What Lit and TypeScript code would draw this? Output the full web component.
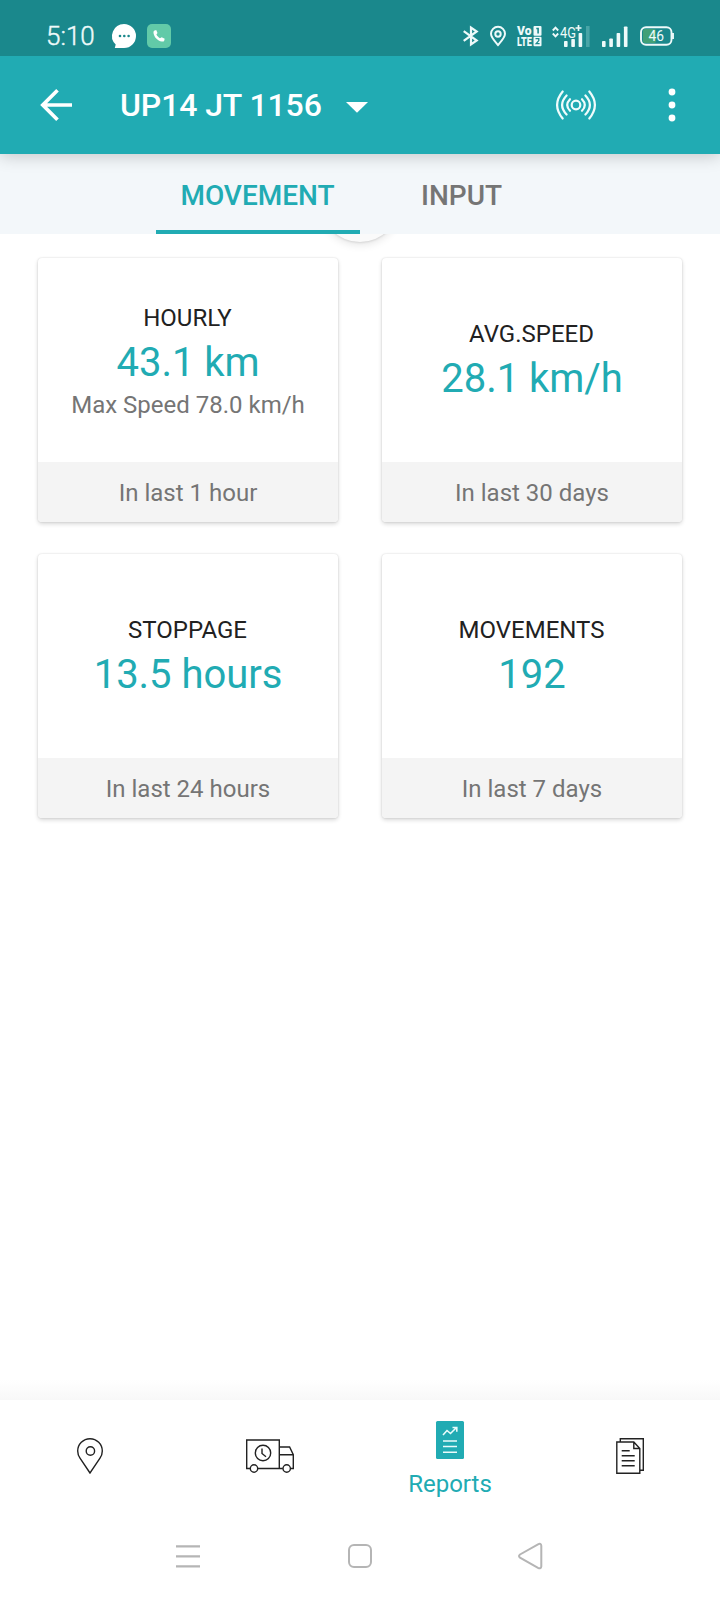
import { LitElement, html, css, svg, nothing } from "lit";
import { customElement, property } from "lit/decorators.js";

@customElement("stat-card")
class StatCard extends LitElement {
  @property() label = "";
  @property() value = "";
  @property() detail = "";
  @property() period = "";

  static styles = css`
    :host {
      display: flex;
      flex-direction: column;
      height: 264px;
      border-radius: 4px;
      overflow: hidden;
      background: #fff;
      box-shadow: 0 0 2px rgba(0, 0, 0, 0.14), 0 2px 4px rgba(0, 0, 0, 0.16);
      text-align: center;
      font-size: 24px;
      line-height: 28px;
    }
    .body {
      flex: 1;
      display: flex;
      flex-direction: column;
      justify-content: center;
      padding-top: 2px;
    }
    .label { color: #212121; padding-right: 1px; }
    .value {
      color: #21abb3;
      font-size: 40px;
      line-height: 47px;
      padding-top: 7px;
      letter-spacing: -0.05px;
    }
    .detail { color: #757575; padding-top: 5px; }
    .foot {
      height: 60px;
      line-height: 62px;
      background: #f4f4f4;
      color: #757575;
    }
  `;

  render() {
    return html`
      <div class="body">
        <div class="label">${this.label}</div>
        <div class="value">${this.value}</div>
        ${this.detail ? html`<div class="detail">${this.detail}</div>` : nothing}
      </div>
      <div class="foot">${this.period}</div>
    `;
  }
}

const cards = [
  { label: "HOURLY", value: "43.1 km", detail: "Max Speed 78.0 km/h", period: "In last 1 hour" },
  { label: "AVG.SPEED", value: "28.1 km/h", detail: "", period: "In last 30 days" },
  { label: "STOPPAGE", value: "13.5 hours", detail: "", period: "In last 24 hours" },
  { label: "MOVEMENTS", value: "192", detail: "", period: "In last 7 days" },
];

const bars = (x: number, step: number, tops: number[]) =>
  tops.map((t, i) => svg`<rect x=${x + i * step} y=${t} width="3.6" height=${22 - t} rx="0.8" fill="#eefafa"/>`);

@customElement("app-root")
class AppRoot extends LitElement {
  static styles = css`
    :host {
      display: flex;
      flex-direction: column;
      width: 720px;
      height: 1600px;
      overflow: hidden;
      background: #fff;
      font-family: Roboto, sans-serif;
    }
    svg { display: block; flex: none; overflow: visible; }
    .status {
      flex: none;
      display: flex;
      align-items: center;
      height: 56px;
      box-sizing: border-box;
      padding: 16px 46px 0 46px;
      background: #1a888c;
      color: #eefafa;
      position: relative;
      z-index: 3;
    }
    .clock { width: 66px; font-size: 26px; line-height: 40px; font-weight: 300; -webkit-text-stroke: 0.4px #eefafa; }
    .apps { display: flex; gap: 11px; flex: 1; }
    .system { display: flex; align-items: center; }
    .bt { margin-right: 12px; }
    .loc { margin-right: 11px; }
    .volte { margin-right: 10px; }
    .cell { margin-right: 12px; }
    .signal { margin-right: 12px; }
    .bar {
      flex: none;
      display: flex;
      align-items: center;
      height: 98px;
      box-sizing: border-box;
      padding: 0 44px 0 40px;
      background: #21abb3;
      color: #fff;
      position: relative;
      z-index: 2;
      box-shadow: 0 2px 16px rgba(0, 0, 0, 0.2);
    }
    .title { margin-left: 48px; font-size: 32px; font-weight: 500; line-height: 98px; letter-spacing: -0.1px; }
    .caret { margin: 5px auto 0 24px; }
    .radio { margin-right: 72px; }
    .tabs {
      flex: none;
      display: flex;
      justify-content: center;
      height: 80px;
      background: #f3f7fa;
      position: relative;
      z-index: 1;
    }
    .tab {
      box-sizing: border-box;
      height: 80px;
      padding: 3px 1px 0 0;
      line-height: 78px;
      font-size: 28px;
      font-weight: 500;
      text-align: center;
      color: #757575;
      width: 204px;
    }
    .tab.active { color: #21abb3; border-bottom: 4px solid #21abb3; }
    .content { flex: 1; position: relative; padding: 24px 38px 0; }
    .spinner {
      position: absolute;
      left: 320px;
      top: -72px;
      width: 80px;
      height: 80px;
      border-radius: 50%;
      background: #fafafa;
      box-shadow: 0 1px 2px rgba(0, 0, 0, 0.1), 0 3px 9px rgba(0, 0, 0, 0.1);
    }
    .grid {
      display: grid;
      grid-template-columns: 300px 300px;
      gap: 32px 44px;
      position: relative;
    }
    .shade { flex: none; height: 20px; background: linear-gradient(#fff, #f8f8f8); }
    .nav {
      flex: none;
      display: grid;
      grid-template-columns: repeat(4, 180px);
      height: 112px;
      background: #fff;
    }
    .item { display: flex; flex-direction: column; align-items: center; justify-content: center; }
    .item.on { justify-content: flex-start; padding-top: 21px; color: #21abb3; font-size: 24px; line-height: 28px; gap: 11px; }
    .keys {
      flex: none;
      display: flex;
      align-items: center;
      justify-content: space-between;
      height: 88px;
      box-sizing: border-box;
      padding: 0 176px;
    }
  `;

  render() {
    return html`
      <div class="status">
        <div class="clock">5:10</div>
        <div class="apps">
          <svg width="24" height="24" viewBox="0 0 24 24">
            <path d="M12 0a12 12 0 1 1 0 24H2.800l.900-3.400A12 12 0 0 1 12 0z" fill="#fff"/>
            <g fill="#1a888c"><circle cx="8" cy="12" r="1.300"/><circle cx="12.300" cy="12" r="1.300"/><circle cx="16.600" cy="12" r="1.300"/></g>
          </svg>
          <svg width="24" height="24" viewBox="0 0 24 24">
            <rect width="24" height="24" rx="5" fill="#62caa8"/>
            <path d="M7 6.800l2.200-.800 1.300 3-1.100 1.600c.900 1.600 2 2.800 3.600 3.700l1.700-1 3 1.400-.600 2.300c-.600.700-1.500.700-2.300.500-4.400-1-7.600-4.200-8.300-8.600-.100-.800 0-1.600.500-2.100z" fill="#fff"/>
          </svg>
        </div>
        <div class="system">
          <svg class="bt" width="15" height="20" viewBox="0 0 15 20" fill="none" stroke="#eefafa" stroke-width="2.200">
            <path d="M.700 5.200l13 9.300L8 18.500v-17l5.700 4L.700 14.800"/>
          </svg>
          <svg class="loc" width="16" height="20" viewBox="0 0 16 20" fill="none" stroke="#eefafa" stroke-width="2">
            <path d="M8 19C4 14.500 1 11.500 1 7.800a7 7 0 0 1 14 0C15 11.500 12 14.500 8 19z"/><circle cx="8" cy="8" r="2.700"/>
          </svg>
          <svg class="volte" width="25" height="22" viewBox="0 0 25 22" fill="#eefafa" font-family="Roboto" font-weight="900" font-size="12">
            <text x="0" y="10" textLength="14.500" lengthAdjust="spacingAndGlyphs">Vo</text>
            <text x="0" y="21.200" textLength="14.800" lengthAdjust="spacingAndGlyphs">LTE</text>
            <rect x="16.500" y="1" width="8" height="9.700" rx="1"/><rect x="16.500" y="11.700" width="8" height="9.500" rx="1"/>
            <path d="M19.300 3.500h1.800v5" fill="none" stroke="#1a888c" stroke-width="1.600"/>
            <path d="M18.500 13.700h3.300v1.900l-2.600 3h3.400" fill="none" stroke="#1a888c" stroke-width="1.300"/>
          </svg>
          <svg class="cell" width="38" height="22" viewBox="0 0 38 22" fill="#eefafa" font-family="Roboto">
            <path d="M0.800 5.500l2.700-2.800 2.700 2.800M0.800 8.500l2.700 2.800 2.700-2.800" fill="none" stroke="#eefafa" stroke-width="1.900"/>
            <text x="8" y="12.500" font-size="15" textLength="16" lengthAdjust="spacingAndGlyphs">4G</text>
            <path d="M26.500 0v6M23.500 3h6" stroke="#eefafa" stroke-width="1.700"/>
            ${bars(12, 7.3, [16, 14, 8])}
            <rect x="34" y="1" width="3.600" height="21" fill="#48a5a7"/>
          </svg>
          <svg class="signal" width="26" height="22" viewBox="0 0 26 22">${bars(0, 7.3, [16, 13.5, 8, 1.5])}</svg>
          <svg width="34" height="20" viewBox="0 0 34 20">
            <rect x="3" y="3" width="13" height="14" rx="2" fill="#40a077"/>
            <rect x="1" y="1.300" width="30.500" height="17.400" rx="5" fill="none" stroke="#eefafa" stroke-width="1.900"/>
            <path d="M33 7v6" stroke="#eefafa" stroke-width="1.900"/>
            <text x="16.200" y="15.300" text-anchor="middle" font-family="Roboto" font-size="14.800" textLength="15.500" lengthAdjust="spacingAndGlyphs" fill="#eefafa">46</text>
          </svg>
        </div>
      </div>

      <div class="bar">
        <svg width="32" height="32" viewBox="0 0 32 32" fill="none" stroke="#fff" stroke-width="3.700">
          <path d="M17.500 1.300L2.800 16l14.700 14.700M2.800 16H32"/>
        </svg>
        <div class="title">UP14 JT 1156</div>
        <svg class="caret" width="22" height="11" viewBox="0 0 22 11"><path d="M0 0h22L11 10.700z" fill="#fff"/></svg>
        <svg class="radio" width="40" height="30" viewBox="0 0 40 30" fill="none" stroke="#f0fcfc" stroke-width="2.200" stroke-linecap="round">
          <circle cx="20" cy="15" r="4.300"/>
          <path d="M14 9.200q-5.600 5.800 0 11.600M10.600 5.500q-9 9.500 0 19M6.700 1.500q-11.200 13.500 0 27M26 9.200q5.600 5.800 0 11.600M29.400 5.500q9 9.500 0 19M33.300 1.500q11.200 13.500 0 27"/>
        </svg>
        <svg width="8" height="34" viewBox="0 0 8 34" fill="#fff">
          <circle cx="4" cy="4" r="3.400"/><circle cx="4" cy="17" r="3.400"/><circle cx="4" cy="30" r="3.400"/>
        </svg>
      </div>

      <div class="tabs">
        <div class="tab active">MOVEMENT</div>
        <div class="tab">INPUT</div>
      </div>

      <div class="content">
        <div class="spinner"></div>
        <div class="grid">
          ${cards.map((c) => html`<stat-card .label=${c.label} .value=${c.value} .detail=${c.detail} .period=${c.period}></stat-card>`)}
        </div>
      </div>

      <div class="shade"></div>
      <div class="nav">
        <div class="item">
          <svg width="26" height="36" viewBox="0 0 26 36" fill="none" stroke="#222" stroke-width="1.400">
            <path d="M13 35L3 20.200C1.500 18 .700 15.800 .700 13a12.300 12.300 0 0 1 24.600 0c0 2.800-.800 5-2.300 7.200z"/><circle cx="13.400" cy="13" r="4.200"/>
          </svg>
        </div>
        <div class="item">
          <svg width="48" height="34" viewBox="0 0 48 34" fill="none" stroke="#222" stroke-width="1.400">
            <path d="M4 29.500H.700V1h32.600v28.500M12 29.500h24.800M33.300 8h10.300l3.700 7.700v13.800H44.500M33.300 15.700h14"/>
            <circle cx="8" cy="29.500" r="3.700"/><circle cx="40.700" cy="29.500" r="3.700"/>
            <circle cx="17" cy="14" r="7.700"/><path d="M16 9.500v5l4 3.200"/>
          </svg>
        </div>
        <div class="item on">
          <svg width="28" height="38" viewBox="0 0 28 38" fill="none" stroke="#e9fbfb" stroke-width="1.600">
            <rect width="28" height="38" rx="1.500" fill="#21abb3" stroke="none"/>
            <path d="M7 14l4-4.500 3.500 3L20.500 6.500M16.500 6.500h4.300v4.300M7 20h14M7 25.500h14M7 31.200h14"/>
          </svg>
          <span>Reports</span>
        </div>
        <div class="item">
          <svg width="28" height="36" viewBox="0 0 28 36" fill="none" stroke="#222" stroke-width="1.400">
            <path d="M4.300 4V.800h23v31.400H24M.800 4h17l6 6.500v24.700H.800zM17.800 4v6.500h6M5.700 12.800h8M5.700 17.800h13M5.700 22.800h13M5.700 27.800h13"/>
          </svg>
        </div>
      </div>

      <div class="keys">
        <svg width="24" height="24" viewBox="0 0 24 24" stroke="#b5b5b5" stroke-width="2.200"><path d="M0 2.300h24M0 12.300h24M0 22.300h24"/></svg>
        <svg width="24" height="24" viewBox="0 0 24 24" fill="none" stroke="#b5b5b5" stroke-width="2"><rect x="1" y="1" width="22" height="22" rx="5"/></svg>
        <svg width="24" height="28" viewBox="2 0 24 28" fill="none" stroke="#b5b5b5" stroke-width="2"><path d="M2 12.500L20 2.300q3-1.500 3.300 1.500v20.500q-.300 3-3.300 1.500L2 15.600q-2-1.500 0-3.100z"/></svg>
      </div>
    `;
  }
}
